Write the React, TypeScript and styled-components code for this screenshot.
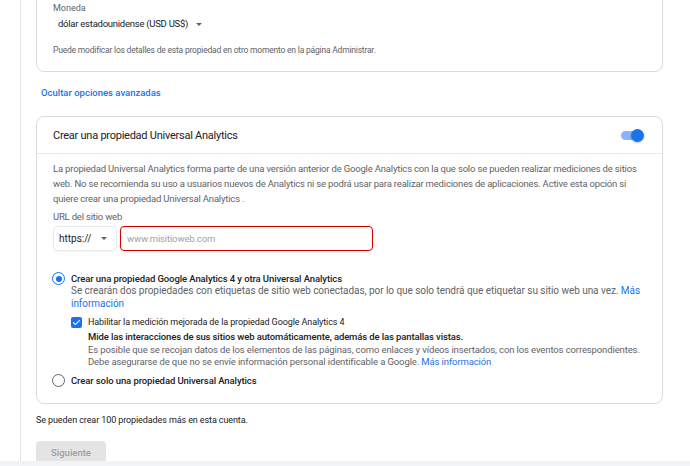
import React from "react";
import styled, { createGlobalStyle } from "styled-components";

const GlobalStyle = createGlobalStyle`
  html, body {
    margin: 0;
    padding: 0;
    background: #ffffff;
  }
  body {
    font-family: Roboto, "Liberation Sans", Arial, sans-serif;
    color: #202124;
  }
  #root {
    width: 690px;
    height: 466px;
    overflow: hidden;
  }
`;

const Page = styled.div`
  display: flex;
  flex-direction: column;
  height: 466px;
`;

const Content = styled.main`
  flex: 1;
  min-height: 0;
  overflow: hidden;
  margin-left: 20px;
  border-left: 1px solid #e3e3e3;
  padding-left: 15px;
`;

const BottomBand = styled.div`
  height: 5px;
  background: #f1f3f4;
`;

const Card = styled.section<{ $top?: number }>`
  width: 627px;
  box-sizing: border-box;
  border: 1px solid #dadce0;
  border-radius: 8px;
  margin-top: ${(p) => p.$top ?? 0}px;
  background: #fff;
`;

const CardBody = styled.div<{ $pad: string }>`
  padding: ${(p) => p.$pad};
`;

const FieldLabel = styled.div`
  font-size: 9px;
  line-height: 14px;
  color: #5f6368;
`;

const CurrencySelect = styled.div`
  display: flex;
  align-items: center;
  gap: 8px;
  margin: 2px 0 0 5px;
  font-size: 9.5px;
  letter-spacing: -0.25px;
  line-height: 14px;
  color: #202124;
`;

const Caret = styled.span`
  width: 0;
  height: 0;
  border-left: 3.5px solid transparent;
  border-right: 3.5px solid transparent;
  border-top: 3.5px solid #5f6368;
`;

const Hint = styled.p`
  margin: 12px 0 0;
  font-size: 8.5px;
  letter-spacing: -0.2px;
  line-height: 14px;
  color: #5f6368;
`;

const TextLink = styled.a`
  color: #1a73e8;
  text-decoration: none;
  cursor: pointer;
`;

const AdvancedLink = styled(TextLink)`
  display: block;
  margin: 14px 0 0 5px;
  font-size: 9.5px;
  font-weight: 500;
  line-height: 14px;
`;

const CardHeader = styled.header`
  display: flex;
  align-items: center;
  justify-content: space-between;
  height: 36px;
  padding: 0 16px;
  border-bottom: 1px solid #e8eaed;
  font-size: 11px;
  letter-spacing: -0.25px;
  color: #202124;
`;

const Toggle = styled.span`
  position: relative;
  width: 22px;
  height: 9px;
  border-radius: 5px;
  background: #8ab4f8;
  margin-right: 3px;

  &::after {
    content: "";
    position: absolute;
    right: -1px;
    top: -2px;
    width: 13px;
    height: 13px;
    border-radius: 50%;
    background: #1a73e8;
    box-shadow: 0 1px 2px rgba(0, 0, 0, 0.25);
  }
`;

const Paragraph = styled.p`
  margin: 0;
  white-space: nowrap;
  font-size: 9.5px;
  letter-spacing: -0.18px;
  line-height: 15px;
  color: #5f6368;
`;

const UrlLabel = styled.div`
  margin-top: 4px;
  font-size: 9.5px;
  letter-spacing: -0.2px;
  line-height: 14px;
  color: #5f6368;
`;

const UrlRow = styled.div`
  display: flex;
  gap: 3px;
  margin-top: 2px;
`;

const ProtocolSelect = styled.div`
  display: flex;
  align-items: center;
  justify-content: space-between;
  width: 64px;
  height: 25px;
  box-sizing: border-box;
  padding: 0 9px 0 5px;
  border: 1px solid #e8eaed;
  border-radius: 4px;
  box-shadow: 0 1px 1px rgba(0, 0, 0, 0.04);
  font-size: 10px;
  color: #202124;
`;

const UrlInput = styled.input`
  width: 253px;
  height: 25px;
  box-sizing: border-box;
  padding: 0 6px;
  border: 1.5px solid #d50000;
  border-radius: 4px;
  outline: none;
  font-family: inherit;
  font-size: 9.5px;
  letter-spacing: -0.15px;
  color: #202124;

  &::placeholder {
    color: #a0a4a8;
  }
`;

const OptionList = styled.div`
  margin-top: 21px;
  display: flex;
  flex-direction: column;
`;

const Option = styled.div<{ $gap?: number }>`
  display: flex;
  align-items: flex-start;
  gap: 6px;
  margin: ${(p) => p.$gap ?? 0}px 0 0 -1px;
`;

const Radio = styled.span<{ $checked?: boolean }>`
  flex: none;
  width: 13px;
  height: 13px;
  box-sizing: border-box;
  border-radius: 50%;
  border: 1.5px solid ${(p) => (p.$checked ? "#1a73e8" : "#5f6368")};
  display: flex;
  align-items: center;
  justify-content: center;

  &::after {
    content: "";
    display: ${(p) => (p.$checked ? "block" : "none")};
    width: 6px;
    height: 6px;
    border-radius: 50%;
    background: #1a73e8;
  }
`;

const OptionText = styled.div`
  display: flex;
  flex-direction: column;
  white-space: nowrap;
`;

const OptionTitle = styled.div`
  font-size: 9.5px;
  letter-spacing: -0.1px;
  line-height: 13px;
  font-weight: 500;
  color: #202124;
`;

const OptionDesc = styled.div<{ $strong?: boolean; $large?: boolean }>`
  font-size: ${(p) => (p.$large ? 10 : 9.5)}px;
  letter-spacing: ${(p) => (p.$large ? -0.05 : -0.12)}px;
  line-height: 12.5px;
  color: ${(p) => (p.$strong ? "#202124" : "#5f6368")};
  font-weight: ${(p) => (p.$strong ? 500 : 400)};
`;

const CheckRow = styled.div`
  display: flex;
  align-items: center;
  gap: 6px;
  margin-top: 6px;
  font-size: 9px;
  letter-spacing: -0.1px;
  line-height: 13px;
  color: #202124;
`;

const Checkbox = styled.span`
  flex: none;
  width: 11px;
  height: 11px;
  border-radius: 2px;
  background: #1a73e8;
  display: flex;
  align-items: center;
  justify-content: center;
`;

const Nested = styled.div`
  margin: 2px 0 0 17px;
`;

const Quota = styled.p`
  margin: 9px 0 0;
  font-size: 9px;
  letter-spacing: -0.1px;
  line-height: 14px;
  color: #202124;
`;

const NextButton = styled.button`
  display: block;
  flex: none;
  margin-top: 14px;
  width: 70px;
  height: 23px;
  padding: 0;
  border: none;
  border-radius: 4px;
  background: #e4e4e4;
  color: #a0a0a0;
  font-family: inherit;
  font-size: 9.5px;
  font-weight: 500;
  cursor: default;
`;

const CheckMark = () => (
  <svg width="9" height="9" viewBox="0 0 24 24">
    <path
      d="M4 12.5l5 5L20 6.5"
      fill="none"
      stroke="#fff"
      strokeWidth="3"
      strokeLinecap="square"
    />
  </svg>
);

export default function App() {
  return (
    <Page>
      <GlobalStyle />
      <Content>
        <Card $top={-20}>
          <CardBody $pad="20px 16px 14px">
            <FieldLabel>Moneda</FieldLabel>
            <CurrencySelect>
              dólar estadounidense (USD US$) <Caret />
            </CurrencySelect>
            <Hint>
              Puede modificar los detalles de esta propiedad en otro momento en
              la página Administrar.
            </Hint>
          </CardBody>
        </Card>

        <AdvancedLink>Ocultar opciones avanzadas</AdvancedLink>

        <Card $top={16}>
          <CardHeader>
            Crear una propiedad Universal Analytics
            <Toggle />
          </CardHeader>
          <CardBody $pad="7px 16px 16px">
            <Paragraph>
              La propiedad Universal Analytics forma parte de una versión
              anterior de Google Analytics con la que solo se pueden realizar
              mediciones de sitios
              <br />
              web. No se recomienda su uso a usuarios nuevos de Analytics ni se
              podrá usar para realizar mediciones de aplicaciones. Active esta
              opción si
              <br />
              quiere crear una propiedad Universal Analytics .
            </Paragraph>
            <UrlLabel>URL del sitio web</UrlLabel>
            <UrlRow>
              <ProtocolSelect>
                https:// <Caret />
              </ProtocolSelect>
              <UrlInput placeholder="www.misitioweb.com" />
            </UrlRow>

            <OptionList>
              <Option>
                <Radio $checked />
                <OptionText>
                  <OptionTitle>
                    Crear una propiedad Google Analytics 4 y otra Universal
                    Analytics
                  </OptionTitle>
                  <OptionDesc $large>
                    Se crearán dos propiedades con etiquetas de sitio web
                    conectadas, por lo que solo tendrá que etiquetar su sitio web
                    una vez.{" "}
                    <TextLink>
                      Más
                      <br />
                      información
                    </TextLink>
                  </OptionDesc>
                  <CheckRow>
                    <Checkbox>
                      <CheckMark />
                    </Checkbox>
                    Habilitar la medición mejorada de la propiedad Google
                    Analytics 4
                  </CheckRow>
                  <Nested>
                    <OptionDesc $strong>
                      Mide las interacciones de sus sitios web automáticamente,
                      además de las pantallas vistas.
                    </OptionDesc>
                    <OptionDesc>
                      Es posible que se recojan datos de los elementos de las
                      páginas, como enlaces y vídeos insertados, con los eventos
                      correspondientes.
                    </OptionDesc>
                    <OptionDesc>
                      Debe asegurarse de que no se envíe información personal
                      identificable a Google. <TextLink>Más información</TextLink>
                    </OptionDesc>
                  </Nested>
                </OptionText>
              </Option>
              <Option $gap={5}>
                <Radio />
                <OptionTitle>Crear solo una propiedad Universal Analytics</OptionTitle>
              </Option>
            </OptionList>
          </CardBody>
        </Card>

        <Quota>Se pueden crear 100 propiedades más en esta cuenta.</Quota>
        <NextButton disabled>Siguiente</NextButton>
      </Content>
      <BottomBand />
    </Page>
  );
}
